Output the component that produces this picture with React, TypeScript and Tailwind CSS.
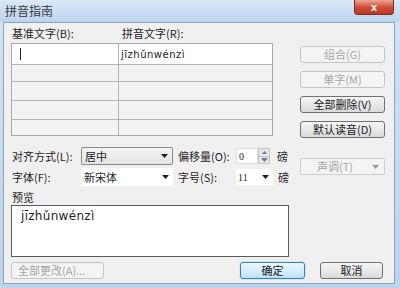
const Arrow = ({ color = "#1e1e1e" }: { color?: string }) => (
  <svg width="7" height="4" viewBox="0 0 7 4">
    <path d="M0 0h7L3.5 4z" fill={color} />
  </svg>
);

const Btn = ({
  label,
  disabled,
  className = "",
}: {
  label: string;
  disabled?: boolean;
  className?: string;
}) => (
  <div
    className={
      "h-[17px] flex items-center justify-center rounded-[3px] border text-[11px] leading-none " +
      (disabled
        ? "border-[#c3c6c9] bg-[#f4f4f4] text-[#a6a6a6] "
        : "border-[#707070] bg-gradient-to-b from-[#f6f6f6] to-[#dadada] text-[#1a1a1a] ") +
      className
    }
  >
    {label}
  </div>
);

const rows = [20, 17, 19, 19, 16];

export default function App() {
  return (
    <div
      className="w-[400px] h-[288px] flex flex-col bg-gradient-to-b from-[#d2e3f5] to-[#bcd3ec] overflow-hidden"
      style={{ fontFamily: '"Noto Sans CJK SC", "Liberation Sans", sans-serif' }}
    >
      {/* title bar */}
      <div className="relative h-[22px] shrink-0 flex items-center pl-[5px] bg-gradient-to-b from-[#dbe9f8] via-[#cadef3] to-[#bdd4ee]">
        <span className="text-[12px] text-[#3a3a3a] leading-none">拼音指南</span>
        <div className="absolute left-[354px] top-0 w-[40px] h-[15px] rounded-b-[4px] border border-t-0 border-[#7b2b21] bg-gradient-to-b from-[#e9a796] via-[#cf5038] to-[#b93a26] flex items-center justify-center">
          <span className="text-white text-[11px] font-bold leading-none" style={{ fontFamily: '"Liberation Sans", sans-serif' }}>x</span>
        </div>
      </div>

      {/* client area */}
      <div className="flex-1 ml-[3px] mr-[5px] mb-[4px] border border-[#8ea3ba] bg-[#f0f0f0] pl-[7px] pt-[3px] text-[11px] text-[#1e1e1e]">
        {/* section A */}
        <div className="flex">
          <div className="w-[262px]">
            <div className="h-[17px] flex items-start leading-[14px]">
              <span className="w-[108px] pl-[1px]">基准文字(B):</span>
              <span className="pl-[3px]">拼音文字(R):</span>
            </div>
            <div className="border border-[#a9a9a9]">
              {rows.map((h, i) => (
                <div
                  key={i}
                  className={
                    "flex " +
                    (i > 0 ? "border-t border-[#b4b4b4] " : "") +
                    (i === 0 ? "bg-white" : "bg-[#f3f3f3]")
                  }
                  style={{ height: h }}
                >
                  <div className="w-[107px] border-r border-[#b4b4b4] flex items-center pl-[8px]">
                    {i === 0 && <span className="w-px h-[12px] bg-[#222]" />}
                  </div>
                  <div className="flex-1 flex items-center pl-[2px]">
                    {i === 0 && (
                      <span className="text-[10px] tracking-[0.5px]" style={{ fontFamily: '"DejaVu Sans", sans-serif' }}>
                        jīzhǔnwénzì
                      </span>
                    )}
                  </div>
                </div>
              ))}
            </div>
          </div>
          <div className="ml-[27px] w-[85px] pt-[20px] flex flex-col gap-[8px]">
            <Btn label="组合(G)" disabled />
            <Btn label="单字(M)" disabled />
            <Btn label="全部删除(V)" />
            <Btn label="默认读音(D)" />
          </div>
        </div>

        {/* section B */}
        <div className="mt-[9px] flex items-center">
          <div className="w-[280px] flex flex-col gap-[3px]">
            <div className="h-[18px] flex items-center">
              <span className="w-[70px] pl-[1px]">对齐方式(L):</span>
              <div className="w-[92px] h-[18px] rounded-[2px] border border-[#8a8a8a] bg-gradient-to-b from-[#f4f4f4] to-[#e4e4e4] flex items-center pl-[3px] pr-[4px]">
                <span className="flex-1">居中</span>
                <Arrow />
              </div>
              <span className="ml-[5px] w-[58px]">偏移量(O):</span>
              <div className="w-[22px] h-[16px] bg-white border border-[#e0e0e0] flex items-center pl-[2px] text-[10px]" style={{ fontFamily: '"Liberation Serif", serif' }}>
                0
              </div>
              <div className="w-[12px] h-[16px] flex flex-col border border-[#c4c4c4] bg-[#e6e6e6]">
                <div className="flex-1 flex items-center justify-center border-b border-[#c4c4c4]">
                  <svg width="5" height="3" viewBox="0 0 5 3"><path d="M0 3h5L2.5 0z" fill="#6a7a90" /></svg>
                </div>
                <div className="flex-1 flex items-center justify-center">
                  <Arrow color="#6a7a90" />
                </div>
              </div>
              <span className="ml-[7px]">磅</span>
            </div>
            <div className="h-[18px] flex items-center">
              <span className="w-[70px] pl-[1px]">字体(F):</span>
              <div className="w-[92px] h-[18px] bg-white flex items-center pl-[3px] pr-[4px]">
                <span className="flex-1">新宋体</span>
                <Arrow />
              </div>
              <span className="ml-[5px] w-[58px]">字号(S):</span>
              <div className="w-[37px] h-[16px] bg-white flex items-center pl-[2px] pr-[4px]">
                <span className="flex-1 text-[10px]" style={{ fontFamily: '"Liberation Serif", serif' }}>11</span>
                <Arrow />
              </div>
              <span className="ml-[5px]">磅</span>
            </div>
          </div>
          <div className="ml-[9px] w-[85px] h-[17px] rounded-[2px] border border-[#c9ccd0] bg-[#f4f4f4] flex items-center pl-[16px] pr-[5px] text-[#a6a6a6]">
            <span className="flex-1">声调(T)</span>
            <Arrow color="#9a9a9a" />
          </div>
        </div>

        {/* section C */}
        <div className="mt-[4px] h-[15px] leading-[14px] pl-[1px]">预览</div>
        <div className="w-[278px] h-[52px] border border-[#5a5a5a] bg-white pl-[9px] pt-[1px]">
          <span className="text-[12px] tracking-[0.3px]" style={{ fontFamily: '"DejaVu Sans", sans-serif' }}>
            jīzhǔnwénzì
          </span>
        </div>

        {/* section D */}
        <div className="mt-[5px] flex">
          <Btn label="全部更改(A)..." disabled className="w-[93px] justify-start pl-[6px]" />
          <div className="ml-[136px] w-[65px] h-[17px] rounded-[3px] border border-[#3c7fb1] shadow-[0_0_2px_#7fd0f5] bg-gradient-to-b from-[#edf7fd] to-[#bfe2f8] flex items-center justify-center text-[11px] leading-none text-[#1a1a1a]">
            确定
          </div>
          <Btn label="取消" className="ml-[15px] w-[63px]" />
        </div>
      </div>
    </div>
  );
}
